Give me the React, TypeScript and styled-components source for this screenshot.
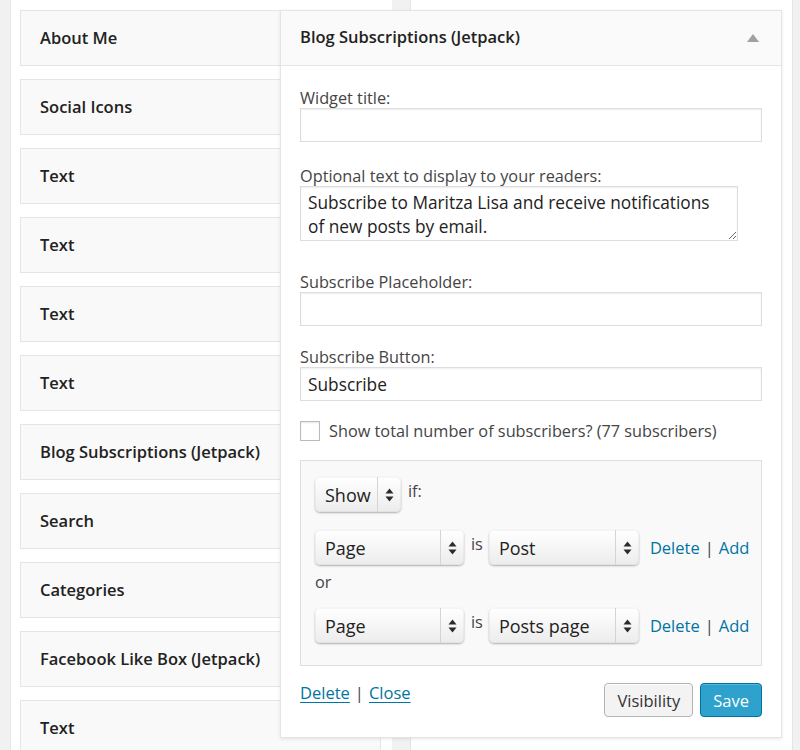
import styled, { createGlobalStyle } from 'styled-components';

const GlobalStyle = createGlobalStyle`
  body {
    margin: 0;
    background: #f1f1f1;
    font-family: "Open Sans", "Liberation Sans", sans-serif;
    color: #444;
  }
`;

const sidebarWidgets = [
  'About Me',
  'Social Icons',
  'Text',
  'Text',
  'Text',
  'Text',
  'Blog Subscriptions (Jetpack)',
  'Search',
  'Categories',
  'Facebook Like Box (Jetpack)',
  'Text',
];

const Page = styled.div`
  position: relative;
  display: flex;
  gap: 18px;
  padding-left: 10px;
  height: 750px;
  overflow: hidden;
`;

const LeftPanel = styled.div`
  width: 382px;
  box-sizing: border-box;
  background: #fff;
  border-left: 1px solid #e8e8e8;
  padding: 10px 11px 0 9px;
  display: flex;
  flex-direction: column;
  gap: 13px;
`;

const RightPanel = styled.div`
  width: 383px;
  box-sizing: border-box;
  background: #fff;
  border-left: 1px solid #e5e5e5;
  border-right: 1px solid #e5e5e5;
`;

const WidgetBar = styled.div`
  height: 56px;
  flex-shrink: 0;
  box-sizing: border-box;
  border: 1px solid #e5e5e5;
  background: #f9f9f9;
  display: flex;
  align-items: center;
  padding: 0 0 2px 19px;
  font-size: 16.5px;
  font-weight: 600;
  color: #222;
`;

const Popup = styled.div`
  position: absolute;
  left: 280px;
  top: 10px;
  width: 502px;
  box-sizing: border-box;
  background: #fff;
  border: 1px solid #e5e5e5;
  box-shadow: 0 1px 3px rgba(0, 0, 0, 0.1);
`;

const PopupHeader = styled.div`
  height: 55px;
  box-sizing: border-box;
  background: #fafafa;
  border-bottom: 1px solid #e5e5e5;
  display: flex;
  align-items: center;
  justify-content: space-between;
  padding: 0 22px 3px 19px;
  font-size: 16.5px;
  font-weight: 600;
  color: #222;
`;

const Arrow = styled.span`
  width: 0;
  height: 0;
  margin-top: 2px;
  border-left: 6px solid transparent;
  border-right: 6px solid transparent;
  border-bottom: 8px solid #a0a0a0;
`;

const PopupBody = styled.div`
  padding: 19px 19px 20px 19px;
`;

const Field = styled.div<{ $gap: number }>`
  margin-bottom: ${p => p.$gap}px;
`;

const Label = styled.div`
  font-size: 16.3px;
  line-height: 22px;
  padding-top: 2px;
  margin-bottom: -1px;
  color: #444;
`;

const TextInput = styled.input`
  display: block;
  width: 462px;
  height: 34px;
  box-sizing: border-box;
  border: 1px solid #ddd;
  box-shadow: inset 0 1px 2px rgba(0, 0, 0, 0.07);
  padding: 0 7px;
  font-family: inherit;
  font-size: 17.3px;
  color: #222;
  outline: none;
`;

const TextArea = styled.textarea`
  display: block;
  width: 438px;
  height: 55px;
  box-sizing: border-box;
  border: 1px solid #ddd;
  box-shadow: inset 0 1px 2px rgba(0, 0, 0, 0.07);
  padding: 4px 7px 2px 7px;
  font-family: inherit;
  font-size: 17.3px;
  line-height: 24px;
  color: #222;
  resize: vertical;
  overflow: hidden;
  outline: none;
`;

const CheckRow = styled.label`
  display: flex;
  align-items: center;
  gap: 9px;
  height: 20px;
  line-height: 20px;
  font-size: 16.3px;
  color: #444;
  margin-bottom: 19px;
`;

const CheckBox = styled.span`
  width: 20px;
  height: 20px;
  box-sizing: border-box;
  border: 1px solid #bbb;
  background: #fff;
  box-shadow: inset 0 1px 2px rgba(0, 0, 0, 0.1);
`;

const VisibilityBox = styled.div`
  width: 462px;
  box-sizing: border-box;
  border: 1px solid #dfdfdf;
  background: #f9f9f9;
  padding: 16px 14px 22px 14px;
`;

const RuleRow = styled.div<{ $gap: number }>`
  display: flex;
  align-items: center;
  gap: 6px;
  white-space: nowrap;
  margin-bottom: ${p => p.$gap}px;
  font-size: 16.3px;
  color: #444;
`;

const Word = styled.span`
  margin-top: -8px;
  padding-left: 1px;
`;

const OrLine = styled.div`
  font-size: 16.3px;
  line-height: 22px;
  margin: 0 0 15px 0;
  color: #444;
`;

const SelectBox = styled.div<{ $w: number }>`
  width: ${p => p.$w}px;
  height: 35px;
  flex-shrink: 0;
  box-sizing: border-box;
  border-radius: 5px;
  background: linear-gradient(#ffffff, #ececec);
  box-shadow: 0 1px 2px rgba(0, 0, 0, 0.3), inset 0 0 0 1px rgba(0, 0, 0, 0.04);
  display: flex;
  align-items: stretch;
  font-size: 18px;
  color: #222;
`;

const SelectText = styled.span`
  flex: 1;
  display: flex;
  align-items: center;
  padding-left: 10px;
`;

const SelectHandle = styled.span`
  width: 23px;
  border-left: 1px solid #d4d4d4;
  display: flex;
  align-items: center;
  justify-content: center;
`;

const LinkText = styled.a<{ $underline?: boolean }>`
  color: #0074a2;
  text-decoration: ${p => (p.$underline ? 'underline' : 'none')};
  text-underline-offset: 3px;
  cursor: pointer;
`;

const Pipe = styled.span`
  color: #444;
  margin: 0 5px;
`;

const Links = styled.span`
  margin-left: 5px;
  font-size: 16.5px;
`;

const Footer = styled.div`
  display: flex;
  align-items: center;
  justify-content: space-between;
  margin-top: 17px;
`;

const FooterLinks = styled.div`
  font-size: 16.5px;
  margin-top: -16px;
`;

const Buttons = styled.div`
  display: flex;
  gap: 7px;
`;

const Button = styled.button<{ $primary?: boolean }>`
  height: 34px;
  box-sizing: border-box;
  padding: 0 12px;
  border-radius: 4px;
  font-family: inherit;
  font-size: 16.5px;
  border: 1px solid ${p => (p.$primary ? '#0074a2' : '#b4b4b4')};
  background: ${p => (p.$primary ? '#2ea2cc' : '#f3f3f3')};
  color: ${p => (p.$primary ? '#fff' : '#333')};
  box-shadow: ${p =>
    p.$primary ? 'inset 0 1px 0 rgba(120, 200, 230, 0.5)' : 'inset 0 1px 0 #fff'};
  cursor: pointer;
`;

const Updown = () => (
  <svg width="9" height="14" viewBox="0 0 9 14">
    <path d="M4.5 0.5 L8.5 5.5 L0.5 5.5 Z" fill="#2a2a2a" />
    <path d="M4.5 13.5 L8.5 8.5 L0.5 8.5 Z" fill="#2a2a2a" />
  </svg>
);

const Select = ({ value, width }: { value: string; width: number }) => (
  <SelectBox $w={width}>
    <SelectText>{value}</SelectText>
    <SelectHandle>
      <Updown />
    </SelectHandle>
  </SelectBox>
);

const RuleLinks = () => (
  <Links>
    <LinkText>Delete</LinkText>
    <Pipe>|</Pipe>
    <LinkText>Add</LinkText>
  </Links>
);

export default function App() {
  return (
    <>
      <GlobalStyle />
      <Page>
        <LeftPanel>
          {sidebarWidgets.map((name, i) => (
            <WidgetBar key={i}>{name}</WidgetBar>
          ))}
        </LeftPanel>
        <RightPanel />

        <Popup>
          <PopupHeader>
            Blog Subscriptions (Jetpack)
            <Arrow />
          </PopupHeader>
          <PopupBody>
            <Field $gap={21}>
              <Label>Widget title:</Label>
              <TextInput defaultValue="" />
            </Field>
            <Field $gap={28}>
              <Label>Optional text to display to your readers:</Label>
              <TextArea defaultValue="Subscribe to Maritza Lisa and receive notifications of new posts by email." />
            </Field>
            <Field $gap={18}>
              <Label>Subscribe Placeholder:</Label>
              <TextInput defaultValue="" />
            </Field>
            <Field $gap={20}>
              <Label>Subscribe Button:</Label>
              <TextInput defaultValue="Subscribe" />
            </Field>
            <CheckRow>
              <CheckBox />
              Show total number of subscribers? (77 subscribers)
            </CheckRow>

            <VisibilityBox>
              <RuleRow $gap={18}>
                <Select value="Show" width={86} />
                <Word>if:</Word>
              </RuleRow>
              <RuleRow $gap={6}>
                <Select value="Page" width={149} />
                <Word>is</Word>
                <Select value="Post" width={150} />
                <RuleLinks />
              </RuleRow>
              <OrLine>or</OrLine>
              <RuleRow $gap={0}>
                <Select value="Page" width={149} />
                <Word>is</Word>
                <Select value="Posts page" width={150} />
                <RuleLinks />
              </RuleRow>
            </VisibilityBox>

            <Footer>
              <FooterLinks>
                <LinkText $underline>Delete</LinkText>
                <Pipe>|</Pipe>
                <LinkText $underline>Close</LinkText>
              </FooterLinks>
              <Buttons>
                <Button>Visibility</Button>
                <Button $primary>Save</Button>
              </Buttons>
            </Footer>
          </PopupBody>
        </Popup>
      </Page>
    </>
  );
}
